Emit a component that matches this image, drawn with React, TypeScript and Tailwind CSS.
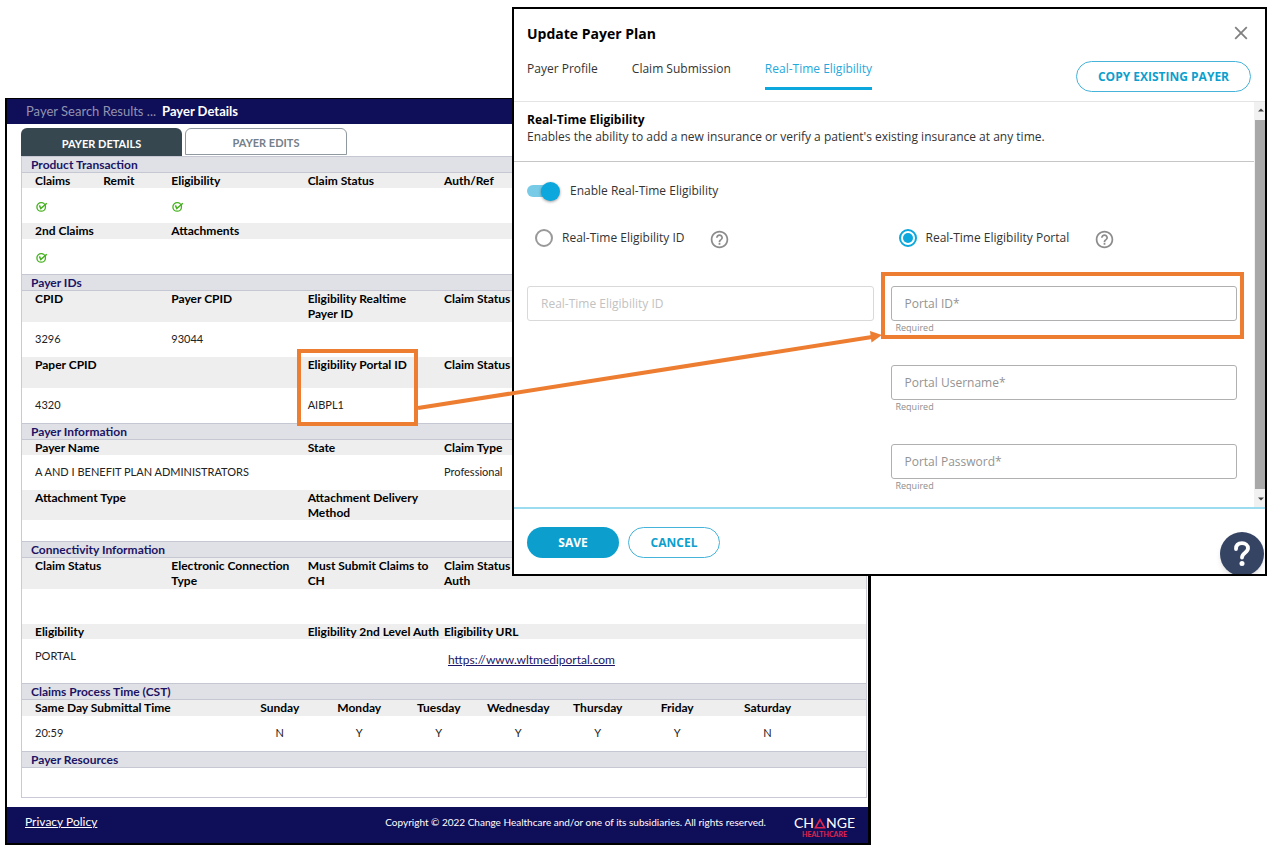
import { useState, type ReactNode } from 'react';

type Cell = { text?: ReactNode; span: string };
type Pair = { labels: Cell[]; values: Cell[]; labelHeight: string; valueHeight: string };

const ONE = 'col-span-1';
const TWO = 'col-span-2';
const FOUR = 'col-span-4';

function CheckMark() {
  return (
    <svg role="img" aria-label="Yes" viewBox="0 0 12 11" className="mt-1 ml-px block h-[11px] w-3" fill="none" stroke="#44b11d">
      <circle cx="5.2" cy="5.9" r="4.3" strokeWidth="1.3" />
      <path d="M3.4 4.4 L4.8 7.6 L10.8 2.2" strokeWidth="1.5" />
    </svg>
  );
}

function Section({ title, children }: { title: string; children?: ReactNode }) {
  return (
    <section>
      <h2 className="h-[17px] border-y border-[#c5c7d3] bg-[#e0e1e6] px-[9px] text-xs leading-[15px] font-bold text-[#1b1464]">
        {title}
      </h2>
      {children}
    </section>
  );
}

function PairTable({ pairs, columns = 'grid-cols-12', center = false }: { pairs: Pair[]; columns?: string; center?: boolean }) {
  const align = center ? 'text-center first:text-left' : 'text-left';
  return (
    <table className="block">
      {pairs.map((pair, i) => (
        <tbody key={i} className="block">
          <tr className={`grid bg-[#eeeeee] px-[13px] text-xs leading-[15px] text-black ${columns} ${pair.labelHeight}`}>
            {pair.labels.map((cell, j) => (
              <th key={j} scope="col" className={`font-bold ${cell.span} ${align}`}>
                {cell.text}
              </th>
            ))}
          </tr>
          <tr className={`grid px-[13px] pt-[9px] text-[11px] leading-4 text-[#222222] ${columns} ${pair.valueHeight}`}>
            {pair.values.map((cell, j) => (
              <td key={j} className={`whitespace-nowrap ${cell.span} ${align}`}>
                {cell.text}
              </td>
            ))}
          </tr>
        </tbody>
      ))}
    </table>
  );
}

const product: Pair[] = [
  {
    labelHeight: 'min-h-[15px]',
    valueHeight: 'h-[35px]',
    labels: [
      { text: 'Claims', span: ONE },
      { text: 'Remit', span: ONE },
      { text: 'Eligibility', span: TWO },
      { text: 'Claim Status', span: TWO },
      { text: 'Auth/Ref', span: TWO },
    ],
    values: [
      { text: <CheckMark />, span: TWO },
      { text: <CheckMark />, span: TWO },
    ],
  },
  {
    labelHeight: 'min-h-4',
    valueHeight: 'h-[35px]',
    labels: [
      { text: '2nd Claims', span: TWO },
      { text: 'Attachments', span: TWO },
    ],
    values: [{ text: <CheckMark />, span: TWO }],
  },
];

const ids: Pair[] = [
  {
    labelHeight: 'min-h-[31px]',
    valueHeight: 'h-[35px]',
    labels: [
      { text: 'CPID', span: TWO },
      { text: 'Payer CPID', span: TWO },
      { text: <>Eligibility Realtime<br />Payer ID</>, span: TWO },
      { text: 'Claim Status', span: TWO },
    ],
    values: [
      { text: '3296', span: TWO },
      { text: '93044', span: TWO },
    ],
  },
  {
    labelHeight: 'min-h-[31px]',
    valueHeight: 'h-[35px]',
    labels: [
      { text: 'Paper CPID', span: FOUR },
      { text: 'Eligibility Portal ID', span: TWO },
      { text: 'Claim Status', span: TWO },
    ],
    values: [
      { text: '4320', span: FOUR },
      { text: 'AIBPL1', span: TWO },
    ],
  },
];

const information: Pair[] = [
  {
    labelHeight: 'min-h-[15px]',
    valueHeight: 'h-[35px]',
    labels: [
      { text: 'Payer Name', span: FOUR },
      { text: 'State', span: TWO },
      { text: 'Claim Type', span: TWO },
    ],
    values: [
      { text: 'A AND I BENEFIT PLAN ADMINISTRATORS', span: FOUR },
      { span: TWO },
      { text: 'Professional', span: TWO },
    ],
  },
  {
    labelHeight: 'min-h-[30px]',
    valueHeight: 'h-[21px]',
    labels: [
      { text: 'Attachment Type', span: FOUR },
      { text: 'Attachment Delivery Method', span: TWO },
    ],
    values: [],
  },
];

const connectivity: Pair[] = [
  {
    labelHeight: 'min-h-[31px]',
    valueHeight: 'h-[35px]',
    labels: [
      { text: 'Claim Status', span: TWO },
      { text: 'Electronic Connection Type', span: TWO },
      { text: 'Must Submit Claims to CH', span: TWO },
      { text: <>Claim Status<br />Auth</>, span: TWO },
    ],
    values: [],
  },
  {
    labelHeight: 'min-h-[15px]',
    valueHeight: 'h-11',
    labels: [
      { text: 'Eligibility', span: FOUR },
      { text: <span className="whitespace-nowrap">Eligibility 2nd Level Auth</span>, span: TWO },
      { text: 'Eligibility URL', span: TWO },
    ],
    values: [
      { text: 'PORTAL', span: FOUR },
      { span: TWO },
      {
        text: (
          <a href="#portal" className="inline-block p-1 text-xs text-[#1b1464] underline">
            https://www.wltmediportal.com
          </a>
        ),
        span: FOUR,
      },
    ],
  },
];

const processing: Pair[] = [
  {
    labelHeight: 'min-h-4',
    valueHeight: 'h-[35px]',
    labels: ['Same Day Submittal Time', 'Sunday', 'Monday', 'Tuesday', 'Wednesday', 'Thursday', 'Friday', 'Saturday'].map(
      (text) => ({ text, span: ONE }),
    ),
    values: ['20:59', 'N', 'Y', 'Y', 'Y', 'Y', 'Y', 'N'].map((text) => ({ text, span: ONE })),
  },
];

function PayerDetails() {
  return (
    <main className="mt-[98px] ml-[5px] w-full max-w-[866px] border-t border-r-[3px] border-b-2 border-l-2 border-black bg-white font-[Lato,sans-serif]">
      <nav aria-label="Breadcrumb" className="flex h-[25px] items-center gap-1.5 bg-[#0f0e58] px-[19px] text-[13px]">
        <a href="#results" className="text-[#9293b0]">Payer Search Results ...</a>
        <span aria-current="page" className="font-bold text-white">Payer Details</span>
      </nav>
      <div className="px-3.5 pt-1">
        <div className="flex h-[28px] gap-[3px]">
          <button className="h-7 w-[161px] rounded-t-md bg-[#37474f] pt-1 text-[11px] font-bold text-white">PAYER DETAILS</button>
          <button className="h-[27px] w-[162px] rounded-t-md border border-[#8f999f] bg-white pt-1 text-[11px] font-bold text-[#74808a]">
            PAYER EDITS
          </button>
        </div>
      </div>
      <div className="mr-px mb-[9px] ml-3.5 border-x border-b border-[#c9cad6] pb-[29px]">
        <Section title="Product Transaction"><PairTable pairs={product} /></Section>
        <Section title="Payer IDs"><PairTable pairs={ids} /></Section>
        <Section title="Payer Information"><PairTable pairs={information} /></Section>
        <Section title="Connectivity Information"><PairTable pairs={connectivity} /></Section>
        <Section title="Claims Process Time (CST)">
          <PairTable pairs={processing} center columns="grid-cols-[410fr_repeat(6,159fr)_202fr_70fr]" />
        </Section>
        <Section title="Payer Resources" />
      </div>
      <footer className="flex h-9 items-center bg-[#0f0e58] pr-[13px] pl-[18px] text-white">
        <a href="#privacy" className="mb-1.5 text-xs underline">Privacy Policy</a>
        <p className="mb-1.5 ml-auto text-[10px]">
          Copyright © 2022 Change Healthcare and/or one of its subsidiaries. All rights reserved.
        </p>
        <div className="mt-1 ml-7 flex flex-col items-center">
          <div className="flex h-3.5 items-center text-sm leading-[14px]">
            <span>CH</span>
            <svg aria-hidden="true" viewBox="0 0 12 11" className="h-[11px] w-3" fill="none" stroke="#e4254f" strokeWidth="1.6">
              <path d="M6 1.6 L10.6 9.8 L1.4 9.8 Z" />
            </svg>
            <span>NGE</span>
          </div>
          <div className="text-[7px] leading-[8px] font-bold text-[#e4254f]">HEALTHCARE</div>
        </div>
      </footer>
    </main>
  );
}

function HelpIcon({ label }: { label: string }) {
  return (
    <button aria-label={label} className="mt-1">
      <svg viewBox="0 0 24 24" className="size-[21px]" fill="#8c8c8c">
        <path d="M11 18h2v-2h-2v2zm1-16C6.48 2 2 6.48 2 12s4.48 10 10 10 10-4.48 10-10S17.52 2 12 2zm0 18c-4.41 0-8-3.59-8-8s3.59-8 8-8 8 3.59 8 8-3.59 8-8 8zm0-14c-2.21 0-4 1.79-4 4h2c0-1.1.9-2 2-2s2 .9 2 2c0 2-3 1.75-3 5h2c0-2.25 3-2.5 3-5 0-2.21-1.79-4-4-4z" />
      </svg>
    </button>
  );
}

function RadioOption({ label, checked, onSelect }: { label: string; checked: boolean; onSelect: () => void }) {
  return (
    <div className="flex h-[25px] items-center justify-start gap-[25px] pl-2">
      <label className="flex items-center gap-[9px]">
        <input type="radio" name="mode" checked={checked} onChange={onSelect} className="peer sr-only" />
        <span className="flex size-[18px] items-center justify-center rounded-full border-2 border-[#999999] peer-checked:border-[#0ba7dd] peer-checked:[&>span]:bg-[#0ba7dd]">
          <span className="size-[10px] rounded-full" />
        </span>
        {label}
      </label>
      <HelpIcon label={`About ${label}`} />
    </div>
  );
}

function PortalField({ label, type = 'text' }: { label: string; type?: string }) {
  return (
    <label className="flex h-[79px] flex-col text-[9px] text-[#8e8e8e]">
      <input
        type={type}
        aria-label={label}
        placeholder={label}
        className="h-[35px] w-full shrink-0 rounded-[3px] border border-[#b0b0b0] px-[13px] text-xs placeholder:text-[#939393]"
      />
      <span className="pl-[5px] leading-[14px]">Required</span>
    </label>
  );
}

function UpdateDialog() {
  const [enabled, setEnabled] = useState(true);
  const [mode, setMode] = useState<'id' | 'portal'>('portal');
  const tabs = ['Payer Profile', 'Claim Submission', 'Real-Time Eligibility'];
  return (
    <div
      role="dialog"
      aria-labelledby="dialog-title"
      className="absolute top-[7px] left-[512px] w-[755px] overflow-hidden border-2 border-black bg-white font-['Open_Sans',sans-serif] text-xs text-[#333333]"
    >
      <header className="flex h-[93px] justify-between border-b border-[#e4e4e4] pr-3.5 pl-[13px]">
        <div>
          <h1 id="dialog-title" className="pt-[15px] text-sm leading-5 font-bold text-black">Update Payer Plan</h1>
          <div role="tablist" className="mt-[15px] flex gap-[34px]">
            {tabs.map((tab, i) => (
              <button
                key={tab}
                role="tab"
                aria-selected={i === 2}
                className="border-b-[3px] border-transparent pb-2 leading-5 aria-selected:border-[#0ba7dd] aria-selected:text-[#1fa9dc]"
              >
                {tab}
              </button>
            ))}
          </div>
        </div>
        <div className="flex flex-col items-end">
          <button aria-label="Close" className="mt-[17px] mr-[3px]">
            <svg viewBox="0 0 14 14" className="size-3.5" stroke="#808080" strokeWidth="1.8">
              <path d="M1.2 1.2 L12.8 12.8 M12.8 1.2 L1.2 12.8" />
            </svg>
          </button>
          <button className="mt-[21px] h-[31px] w-[175px] rounded-full border border-[#45b3da] font-bold text-[#0c9fce]">
            COPY EXISTING PAYER
          </button>
        </div>
      </header>

      <div className="flex h-[405px]">
        <div className="grow">
          <div className="h-[60px] border-b border-[#c6c6c6] pt-[9px] pl-[13px] leading-[17px]">
            <h2 className="font-bold text-black">Real-Time Eligibility</h2>
            <p>Enables the ability to add a new insurance or verify a patient&apos;s existing insurance at any time.</p>
          </div>
          <div className="pr-[17px] pl-[13px]">
            <label className="flex w-fit items-center gap-2.5 pt-[19px] leading-5">
              <input
                type="checkbox"
                role="switch"
                checked={enabled}
                onChange={() => setEnabled(!enabled)}
                className="peer sr-only"
              />
              <span className="flex h-3 w-[33px] items-center rounded-full bg-[linear-gradient(to_right,#77cbe6_28px,transparent_28px)] peer-checked:justify-end">
                <span className="size-[19px] shrink-0 rounded-full bg-[#0ba7dd] shadow-[0_1px_3px_rgba(0,0,0,0.4)]" />
              </span>
              Enable Real-Time Eligibility
            </label>
            <div className="mt-[24px] grid grid-cols-2 gap-x-[17px]">
              <RadioOption label="Real-Time Eligibility ID" checked={mode === 'id'} onSelect={() => setMode('id')} />
              <RadioOption label="Real-Time Eligibility Portal" checked={mode === 'portal'} onSelect={() => setMode('portal')} />
            </div>
            <div className="mt-9 grid grid-cols-2 gap-x-[17px]">
              <input
                aria-label="Real-Time Eligibility ID"
                placeholder="Real-Time Eligibility ID"
                disabled={mode !== 'id'}
                className="h-[35px] rounded-[3px] border border-[#d9d9d9] px-[13px] placeholder:text-[#c2c2c2]"
              />
              <div>
                <PortalField label="Portal ID*" />
                <PortalField label="Portal Username*" />
                <PortalField label="Portal Password*" type="password" />
              </div>
            </div>
          </div>
        </div>
        <div aria-hidden="true" className="flex w-[11px] flex-col items-center bg-[#f1f1f1]">
          <svg viewBox="0 0 11 18" className="h-[18px] w-[11px]" fill="#404040"><path d="M4 9.500 L7 6.500 L10 9.500 Z" /></svg>
          <div className="w-[10px] grow self-end bg-[#a8a8a8]" />
          <svg viewBox="0 0 11 18" className="h-[18px] w-[11px]" fill="#404040"><path d="M4 8.500 L7 11.500 L10 8.500 Z" /></svg>
        </div>
      </div>

      <footer className="flex h-[67px] gap-[9px] border-t-2 border-[#9bdcf0] pt-[18px] pl-[13px] font-bold">
        <button className="h-[31px] w-[92px] rounded-full bg-[#0c9fce] text-white">SAVE</button>
        <button className="h-[31px] w-[92px] rounded-full border border-[#45b3da] text-[#0c9fce]">CANCEL</button>
      </footer>
      <button
        aria-label="Help"
        className="absolute right-px -bottom-0.5 flex size-11 items-center justify-center rounded-full bg-[#364463] shadow-md"
      >
        <svg viewBox="0 0 20 28" className="h-7 w-5" fill="none" stroke="white" strokeWidth="3.8" strokeLinecap="round">
          <path d="M4 9 C4 4.800 6.500 3.200 10 3.200 C13.600 3.200 16 5.200 16 8.300 C16 12.800 10 12.600 10 17.500" />
          <circle cx="10" cy="23.500" r="2.500" fill="white" stroke="none" />
        </svg>
      </button>
    </div>
  );
}

function Callout() {
  return (
    <svg
      aria-hidden="true"
      viewBox="0 0 1274 849"
      className="pointer-events-none absolute top-0 left-0 h-[849px] w-[1274px]"
      fill="none"
      stroke="#ed7d31"
      strokeWidth="4"
    >
      <rect x="299" y="351" width="117" height="73" />
      <rect x="883" y="274" width="359" height="63" />
      <path d="M418 408 L872 337" />
      <path d="M870 331 L882 335 L871.500 342.500 Z" fill="#ed7d31" stroke="none" />
    </svg>
  );
}

export default function App() {
  return (
    <div className="min-h-screen overflow-x-auto bg-white">
      <div className="relative flow-root max-w-[1274px]">
        <PayerDetails />
        <UpdateDialog />
        <Callout />
      </div>
    </div>
  );
}
